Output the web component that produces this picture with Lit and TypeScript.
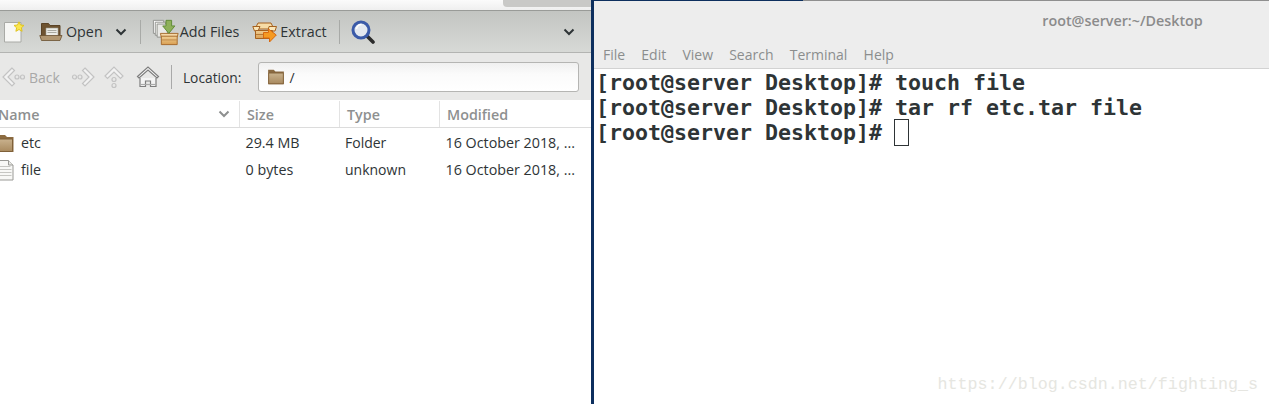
import { LitElement, html, css, svg } from "lit";
import { customElement } from "lit/decorators.js";

const defs = svg`<defs>
<linearGradient id="fold" x1="0" y1="0" x2="0" y2="1"><stop offset="0" stop-color="#c9b28e"/><stop offset="1" stop-color="#a98a5f"/></linearGradient>
<linearGradient id="box" x1="0" y1="0" x2="0" y2="1"><stop offset="0" stop-color="#f0cf95"/><stop offset="1" stop-color="#d99f52"/></linearGradient>
</defs>`;

const folder = (w: number, h: number) => html`<svg width=${w} height=${h} viewBox="0 0 16 16">
<path d="M1 1.500h5l1.500 1.500H15v11.500H1z" fill="#8a6a42"/><path d="M1.500 4.500h13v9.500h-13z" fill="url(#fold)" stroke="#7f6038" stroke-width=".7"/></svg>`;

const doc = html`<svg width="24" height="24" viewBox="0 0 24 24">
<path d="M1.500 2.500h16.500v19.500H1.500z" fill="#f7f7f5" stroke="#a9aaa6"/>
<path d="M16 1.800l1.500 3.200 3.500.4-2.600 2.400.7 3.500-3.100-1.800-3.100 1.800.7-3.500-2.600-2.400 3.500-.4z" fill="#fbe64f" stroke="#e0c41e"/></svg>`;

const openIcon = html`<svg width="24" height="24" viewBox="0 0 24 24">
<path d="M2.500 3.500h7l1.500 2h10v13h-18.500z" fill="#6e5330" stroke="#5a4326"/>
<path d="M7 8h12v9H7z" fill="#ecece6" stroke="#9c9c92" stroke-width=".6"/>
<path d="M8.500 10.500h9M8.500 12.500h9" stroke="#a9a9a0"/>
<path d="M.8 15.500H23l-2 5H2.500z" fill="#b09670" stroke="#6a5030" stroke-width=".8"/></svg>`;

const addIcon = html`<svg width="28" height="28" viewBox="0 0 30 30">
<path d="M1.500 2.500h11v14h-11z" fill="#fff" stroke="#8f908c"/>
<path d="M3.500 4.500h11v14h-11z" fill="#f4f4f2" stroke="#8f908c"/>
<path d="M5.500 6.500h11v14h-11z" fill="#e9e9e6" stroke="#8f908c"/>
<path d="M11 20.500h-1l-1-4h19l-1 4z" fill="#f5d8a6" stroke="#a5682a"/>
<path d="M10 19.500h17v9H10z" fill="url(#box)" stroke="#a5682a"/>
<path d="M10.500 23.500h16" stroke="#a5682a" opacity=".6"/>
<path d="M15 2.500h6v6h3.500l-6.500 8-6.500-8H15z" fill="#8fb15a" stroke="#5f8a34"/></svg>`;

const extractIcon = html`<svg width="26" height="24" viewBox="0 0 26 24">
<path d="M3 9l3-6h13l3 6z" fill="#f7dca6" stroke="#a5611f"/>
<path d="M.8 6.500H8L6 11H2.500z" fill="#fae6b8" stroke="#a5611f"/>
<path d="M17 6.500h7.500L23 11h-7z" fill="#fae6b8" stroke="#a5611f"/>
<path d="M3.500 10.500h17v8h-17z" fill="url(#box)" stroke="#a5611f"/>
<path d="M3.500 14.500h10" stroke="#a5611f" opacity=".7"/>
<path d="M10.500 13.500h5V10l7.800 6-6.800 7v-4h-6z" fill="#f59a22" stroke="#d8690f" transform="translate(1 -1)"/></svg>`;

const searchIcon = html`<svg width="24" height="24" viewBox="0 0 24 24">
<path d="M15.500 15.500l6.500 6.500" stroke="#2c2c2c" stroke-width="3.600" stroke-linecap="round"/>
<circle cx="10" cy="10" r="8" fill="#e3e8f0" stroke="#3a5aa8" stroke-width="3"/>
<path d="M5.500 9a5 5 0 0 1 5-4.500" fill="none" stroke="#fff" stroke-width="1.500"/></svg>`;

const chev = (c = "#2e3436") => html`<svg class="chev" width="12" height="8" viewBox="0 0 12 8"><path d="M1.500 1.500L6 6l4.500-4.500" fill="none" stroke=${c} stroke-width="2"/></svg>`;

const backIcon = html`<svg width="26" height="22" viewBox="0 0 26 22" fill="none" stroke="#c3c3c3" stroke-width="1.200">
<path d="M11 2L2 11l9 9 2.500-2.500L7 11l6.500-6.500z" fill="#f2f2f2"/><circle cx="16" cy="11" r="2"/><circle cx="21.500" cy="11" r="2"/></svg>`;
const fwdIcon = html`<svg width="26" height="22" viewBox="0 0 26 22" fill="none" stroke="#c3c3c3" stroke-width="1.200">
<path d="M15 2l9 9-9 9-2.500-2.500L19 11l-6.500-6.500z" fill="#f2f2f2"/><circle cx="10" cy="11" r="2"/><circle cx="4.500" cy="11" r="2"/></svg>`;
const upIcon = html`<svg width="22" height="24" viewBox="0 0 22 24" fill="none" stroke="#c3c3c3" stroke-width="1.200">
<path d="M2 11l9-9 9 9-2.500 2.500L11 7l-6.500 6.500z" fill="#f2f2f2"/><circle cx="11" cy="14.500" r="2"/><circle cx="11" cy="20.500" r="2"/></svg>`;
const homeIcon = html`<svg width="24" height="24" viewBox="0 0 24 24" fill="none" stroke="#7d7d7d" stroke-width="1.200">
<path d="M1.500 11.500L12 2l10.500 9.500-1.500 1.500L12 5 3 13z" fill="#fafafa"/>
<path d="M4 13v8.500h5.500V16h5v5.500H20V13" fill="#f4f4f4"/><path d="M4 19.500h16" stroke="#aaa"/></svg>`;

const fileIcon = html`<svg width="18" height="22" viewBox="0 0 18 22" fill="none">
<path d="M.5 1.500h10l4.500 4.500v15H.5z" fill="#f8f8f6" stroke="#9a9a96"/>
<path d="M10.500 1.500V6H15" stroke="#9a9a96" fill="#e8e8e4"/>
<path d="M1.500 7.500h11M1.500 10.500h12M1.500 13.500h12M1.500 16.500h12" stroke="#c6c6c2"/></svg>`;

const rowFolder = html`<svg width="18" height="20" viewBox="0 0 18 20">
<path d="M0 2h7l2 2h6.500v15H0z" fill="#8c6b40"/><path d="M0 6h14.500v12.500H0z" fill="url(#fold)" stroke="#7f6038"/></svg>`;

@customElement("app-root")
export class AppRoot extends LitElement {
  static styles = css`
    :host { display: block; width: 1269px; height: 404px; overflow: hidden; background: #fff; }
    .desk { display: flex; height: 404px; font-family: "Open Sans", "Noto Sans", sans-serif; }
    .left { width: 591px; flex: none; display: flex; flex-direction: column; overflow: hidden; }
    .topstrip { height: 10px; flex: none; background: linear-gradient(#fbfbfb, #efefef); display: flex; justify-content: flex-end; }
    .tabs { width: 88px; height: 7px; background: #c9c9c7; border-radius: 0 0 0 4px; }
    .bar1 { height: 43px; flex: none; box-sizing: border-box; display: flex; align-items: center; background: linear-gradient(#c3c5c2, #d7d9d6); border-top: 1px solid #999b98; border-bottom: 1px solid #b3b4b2; font-size: 14.300px; color: #2e3436; }
    .doc { margin-left: 3px; display: flex; }
    .open { margin-left: 12px; display: flex; align-items: center; gap: 3px; }
    .bar1 .chev { margin-left: 12px; }
    .sep { width: 1px; height: 24px; background: #a8aaa7; }
    .bar1 .sep { margin-left: 13px; }
    .bar1 .sep.second { margin-left: 12px; }
    .add { margin-left: 11px; display: flex; align-items: center; }
    .ext { margin-left: 13px; display: flex; align-items: center; gap: 2px; }
    .search { margin-left: 11px; display: flex; }
    .spacer { flex: 1; }
    .endchev { margin-right: 16px; display: flex; }
    .bar2 { height: 47px; flex: none; box-sizing: border-box; padding-top: 1px; display: flex; align-items: center; background: #e8e8e7; font-size: 14px; color: #2e3436; }
    .bar2 svg { flex: none; }
    .back { margin-left: 1px; display: flex; align-items: center; gap: 2px; color: #a8a8a8; }
    .fwd { margin-left: 10px; display: flex; }
    .up { margin-left: 7px; display: flex; }
    .home { margin-left: 11px; display: flex; }
    .bar2 .sep { margin-left: 11px; height: 24px; background: #a9a9a9; }
    .loc { margin-left: 11px; font-size: 13.800px; }
    .field { margin-left: 17px; width: 321px; height: 30px; box-sizing: border-box; border: 1px solid #b5b5b3; border-radius: 3px; background: linear-gradient(#f0f0f0, #fbfbfb 40%, #fff); display: flex; align-items: center; padding-left: 8px; gap: 4px; }
    .list { flex: 1; background: #fff; font-size: 14.300px; color: #2e3436; }
    .head { height: 28px; box-sizing: border-box; padding-top: 1px; display: grid; grid-template-columns: 239px 100px 100px 152px; border-bottom: 1px solid #dcdcdc; color: #8e9090; font-weight: 600; }
    .h { display: flex; align-items: center; padding-left: 7px; border-left: 1px solid #e3e3e3; white-space: nowrap; justify-content: space-between; }
    .h.first { padding-left: 0; border-left: 0; padding-right: 9px; text-indent: -2px; }
    .rows { padding-top: 1px; }
    .row { height: 27px; display: grid; grid-template-columns: 239px 100px 100px 152px; align-items: center; white-space: nowrap; }
    .name { display: flex; align-items: center; gap: 5px; margin-left: -2px; }
    .c { padding-left: 6.500px; overflow: hidden; }
    .c.t { padding-left: 6px; font-size: 14px; }
    .divider { width: 3px; flex: none; background: #0d2f5e; }
    .term { flex: 1; display: flex; flex-direction: column; min-width: 0; }
    .ttop { height: 1px; flex: none; background: #8f8f8f; }
    .ttop2 { width: 209px; height: 1px; background: #0d2f5e; }
    .thead { height: 68px; flex: none; box-sizing: border-box; background: #ededed; border-bottom: 1px solid #d2d2d2; display: flex; flex-direction: column; color: #8b8d8d; }
    .title { text-align: center; font-weight: 600; font-size: 14.300px; line-height: 20px; padding: 10px 0 0 382px; color: #8b8b8b; }
    .menu { display: flex; margin-top: 14px; padding-left: 9px; gap: 16.200px; font-size: 14px; line-height: 20px; }
    .screen { flex: 1; position: relative; background: #fff; padding: 1px 0 0 2px; font: bold 21.600px/25px "DejaVu Sans Mono", monospace; color: #2e3436; }
    .line { display: flex; height: 25px; align-items: center; white-space: pre; }
    .cursor { display: inline-block; width: 15px; height: 27px; box-sizing: border-box; border: 1px solid #2e3436; margin-left: -1px; }
    .wm { position: absolute; right: 11px; bottom: 10px; font: 400 16.700px "Liberation Mono", monospace; color: #e6e6e1; }
    svg.defs { position: absolute; width: 0; height: 0; }
  `;

  render() {
    return html`
      <svg class="defs">${defs}</svg>
      <div class="desk">
        <div class="left">
          <div class="topstrip"><div class="tabs"></div></div>
          <div class="bar1">
            <span class="doc">${doc}</span>
            <span class="open">${openIcon}<span>Open</span></span>
            ${chev()}
            <span class="sep"></span>
            <span class="add">${addIcon}<span>Add Files</span></span>
            <span class="ext">${extractIcon}<span>Extract</span></span>
            <span class="sep second"></span>
            <span class="search">${searchIcon}</span>
            <span class="spacer"></span>
            <span class="endchev">${chev()}</span>
          </div>
          <div class="bar2">
            <span class="back">${backIcon}<span>Back</span></span>
            <span class="fwd">${fwdIcon}</span>
            <span class="up">${upIcon}</span>
            <span class="home">${homeIcon}</span>
            <span class="sep"></span>
            <span class="loc">Location:</span>
            <div class="field">${folder(18, 18)}<span>/</span></div>
          </div>
          <div class="list">
            <div class="head">
              <div class="h first"><span>Name</span>${chev("#8e9090")}</div>
              <div class="h">Size</div>
              <div class="h">Type</div>
              <div class="h">Modified</div>
            </div>
            <div class="rows">
              <div class="row">
                <div class="name">${rowFolder}<span>etc</span></div>
                <div class="c">29.4 MB</div>
                <div class="c t">Folder</div>
                <div class="c">16 October 2018, ...</div>
              </div>
              <div class="row">
                <div class="name">${fileIcon}<span>file</span></div>
                <div class="c">0 bytes</div>
                <div class="c t">unknown</div>
                <div class="c">16 October 2018, ...</div>
              </div>
            </div>
          </div>
        </div>
        <div class="divider"></div>
        <div class="term">
          <div class="ttop"><div class="ttop2"></div></div>
          <div class="thead">
            <div class="title">root@server:~/Desktop</div>
            <div class="menu"><span>File</span><span>Edit</span><span>View</span><span>Search</span><span>Terminal</span><span>Help</span></div>
          </div>
          <div class="screen">
            <div class="line">[root@server Desktop]# touch file</div>
            <div class="line">[root@server Desktop]# tar rf etc.tar file</div>
            <div class="line">[root@server Desktop]# <span class="cursor"></span></div>
            <div class="wm">https://blog.csdn.net/fighting_s</div>
          </div>
        </div>
      </div>
    `;
  }
}
